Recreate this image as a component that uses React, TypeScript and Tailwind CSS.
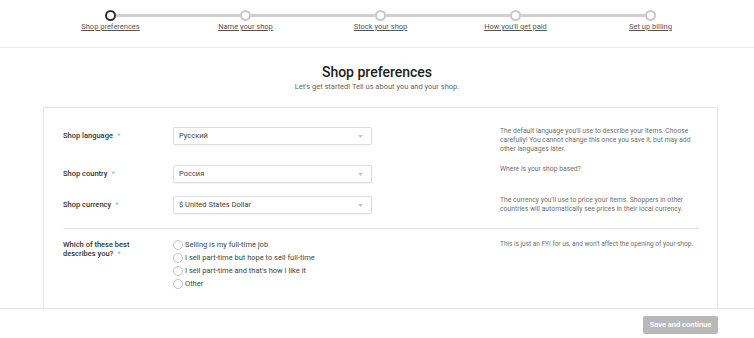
import React from "react";

const steps = ["Shop preferences", "Name your shop", "Stock your shop", "How you'll get paid", "Set up billing"];

const Caret = () => (
    <svg width="5" height="3" viewBox="0 0 5 3" className="shrink-0">
        <path d="M0 0 L5 0 L2.5 3 Z" fill="#c4c4c4" />
    </svg>
);

const Select = ({ value }: { value: string }) => (
    <div className="flex h-[18px] w-[199px] shrink-0 items-center justify-between rounded-[2px] border border-[#dcdcdc] bg-white pl-[5px] pr-[8px] text-[7.5px] text-[#444] shadow-[0_1px_1px_rgba(0,0,0,0.04)]">
        <span>{value}</span>
        <Caret />
    </div>
);

const Label = ({ children }: { children: React.ReactNode }) => (
    <div className="flex h-[18px] w-[110px] shrink-0 items-center text-[7.5px] font-medium text-[#333]">
        <span>{children}</span>
        <span className="ml-[4px] text-[#7fc8dc]">*</span>
    </div>
);

const Help = ({ children }: { children: React.ReactNode }) => (
    <div className="ml-[128px] w-[205px] shrink-0 text-[6.8px] leading-[9px] text-[#6f6f6f]">{children}</div>
);

export default function App() {
    return (
        <div className="h-[338px] w-[754px] overflow-hidden bg-white font-['Roboto',Arial,sans-serif]">
            {/* STEPPER */}
            <header className="h-[48px] border-b border-[#e9e9e9]">
                <div className="ml-[43px] flex w-[675px] pt-[10px]">
                    {steps.map((s, i) => (
                        <div key={s} className="flex flex-1 flex-col items-center">
                            <div className="flex h-[11px] w-full items-center">
                                <div className={i === 0 ? "h-[3px] flex-1" : "h-[3px] flex-1 bg-[#d0d0d0]"} />
                                <div
                                    className={
                                        i === 0
                                            ? "h-[11px] w-[11px] rounded-full border-[2.5px] border-[#333] bg-white"
                                            : "h-[11px] w-[11px] rounded-full border-2 border-[#c9c9c9] bg-white"
                                    }
                                />
                                <div className={i === steps.length - 1 ? "h-[3px] flex-1" : "h-[3px] flex-1 bg-[#d0d0d0]"} />
                            </div>
                            <a className="mt-[1px] text-[7.5px] leading-[10px] text-[#555] underline">{s}</a>
                        </div>
                    ))}
                </div>
            </header>

            {/* TITLE */}
            <div className="pt-[16px] text-center">
                <h1 className="text-[14px] font-medium leading-[16px] text-[#222]">Shop preferences</h1>
                <p className="mt-[2px] text-[7.5px] leading-[10px] text-[#666]">Let's get started! Tell us about you and your shop.</p>
            </div>

            {/* CARD */}
            <section className="ml-[43px] mt-[15px] h-[201px] w-[675px] overflow-hidden border border-b-0 border-[#e6e6e6] pl-[19px] pr-[18px] pt-[19px]">
                <div className="flex h-[38px] items-start">
                    <Label>Shop language</Label>
                    <Select value="Русский" />
                    <Help>
                        The default language you'll use to describe your items. Choose carefully! You cannot change this once you save it, but may add other languages later.
                    </Help>
                </div>
                <div className="flex h-[31px] items-start">
                    <Label>Shop country</Label>
                    <Select value="Россия" />
                    <Help>Where is your shop based?</Help>
                </div>
                <div className="flex h-[32px] items-start">
                    <Label>Shop currency</Label>
                    <Select value="$ United States Dollar" />
                    <Help>The currency you'll use to price your items. Shoppers in other countries will automatically see prices in their local currency.</Help>
                </div>
                <div className="h-px bg-[#e4e4e4]" />
                <div className="flex items-start pt-[9px]">
                    <div className="mt-[2px] w-[110px] shrink-0 text-[7.5px] font-medium leading-[9px] text-[#333]">
                        Which of these best
                        <br />
                        describes you?<span className="ml-[4px] text-[#7fc8dc]">*</span>
                    </div>
                    <div className="flex w-[199px] shrink-0 flex-col">
                        {["Selling is my full-time job", "I sell part-time but hope to sell full-time", "I sell part-time and that's how I like it", "Other"].map((o) => (
                            <label key={o} className="flex h-[13px] items-center gap-[2px] text-[7.5px] text-[#444]">
                                <span className="h-[10px] w-[10px] rounded-full border border-[#c4c4c4] bg-white" />
                                {o}
                            </label>
                        ))}
                    </div>
                    <Help>
                        <p className="mt-[2px] whitespace-nowrap text-[6.5px]">This is just an FYI for us, and won't affect the opening of your shop.</p>
                    </Help>
                </div>
            </section>

            {/* FOOTER */}
            <footer className="flex h-[30px] justify-end border-t border-[#e6e6e6] pr-[36px] pt-[7px]">
                <button className="h-[18px] w-[75px] rounded-[2px] bg-[#b8b8b8] text-[7.5px] font-semibold text-white">Save and continue</button>
            </footer>
        </div>
    );
}
